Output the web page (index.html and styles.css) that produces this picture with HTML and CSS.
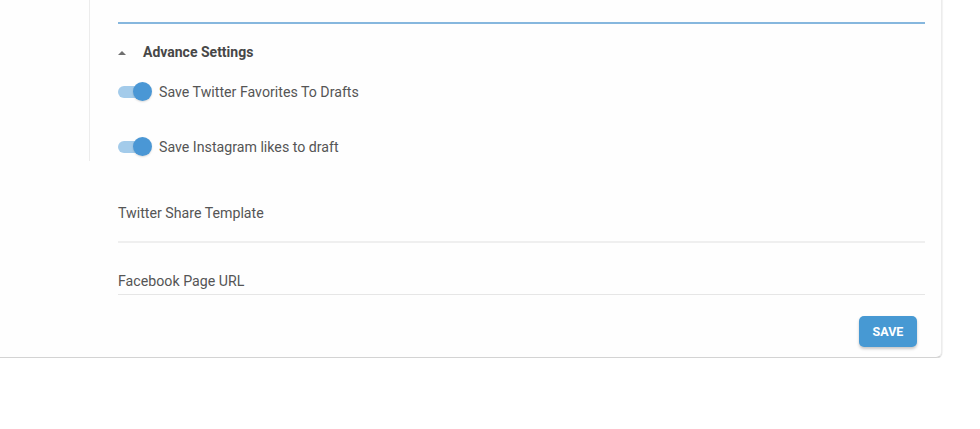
FILE: index.html
```html
<!DOCTYPE html>
<html>
<head>
<meta charset="utf-8">
<link rel="stylesheet" href="styles.css">
</head>
<body>
<div class="card">
  <div class="advanced">
    <div class="field field-active"></div>
    <div class="adv-head">
      <span class="caret"></span>
      <span class="adv-title">Advance Settings</span>
    </div>
    <label class="toggle-row first">
      <span class="switch"><span class="track"></span><span class="thumb"></span></span>
      <span class="toggle-label">Save Twitter Favorites To Drafts</span>
    </label>
    <label class="toggle-row second">
      <span class="switch"><span class="track"></span><span class="thumb"></span></span>
      <span class="toggle-label">Save Instagram likes to draft</span>
    </label>
  </div>
  <div class="field field-template"><span class="field-label">Twitter Share Template</span></div>
  <div class="field field-url"><span class="field-label">Facebook Page URL</span></div>
  <div class="actions">
    <button class="save-btn">SAVE</button>
  </div>
</div>
</body>
</html>
```

FILE: styles.css
```css
html, body {
  margin: 0;
  padding: 0;
  background: #ffffff;
  font-family: Roboto, "Liberation Sans", Arial, sans-serif;
  overflow: hidden;
}

.card {
  margin-left: -10px;
  margin-top: -20px;
  width: 952px;
  box-sizing: border-box;
  background: #fefefe;
  border-right: 1px solid #ececec;
  border-bottom: 1px solid #d3d3d3;
  border-radius: 0 0 6px 6px;
  box-shadow: 0 1px 1px rgba(0,0,0,0.12), 1px 0 1px rgba(0,0,0,0.04);
  padding: 0 16px 10px 128px;
}

.advanced {
  margin-left: -29px;
  padding-left: 28px;
  border-left: 1px solid #ececec;
  height: 181px;
}

.field {
  box-sizing: border-box;
}

.field-active {
  height: 44px;
  border-bottom: 2px solid #86b7de;
}

.adv-head {
  display: flex;
  align-items: center;
  height: 20px;
  margin-top: 18px;
}

.caret {
  width: 0;
  height: 0;
  border-left: 4px solid transparent;
  border-right: 4px solid transparent;
  border-bottom: 4px solid #6f6f6f;
  margin-right: 17px;
  margin-top: 1px;
}

.adv-title {
  font-size: 14px;
  font-weight: 700;
  color: #474747;
}

.toggle-row {
  display: flex;
  align-items: center;
  height: 20px;
}

.toggle-row.first {
  margin-top: 20px;
}

.toggle-row.second {
  margin-top: 35px;
}

.switch {
  position: relative;
  width: 34px;
  height: 20px;
  margin-right: 7px;
  flex: none;
}

.track {
  position: absolute;
  left: 0;
  top: 4px;
  width: 32px;
  height: 12px;
  border-radius: 6px;
  background: #a3cbea;
}

.thumb {
  position: absolute;
  left: 15px;
  top: 0;
  width: 19px;
  height: 19px;
  border-radius: 50%;
  background: #4a97d5;
  box-shadow: 0 1px 2px rgba(0,0,0,0.15);
}

.toggle-label {
  font-size: 14.2px;
  color: #555555;
}

.field-template {
  height: 82px;
  padding-top: 42px;
  border-bottom: 2px solid #efefef;
}

.field-url {
  height: 52px;
  padding-top: 28px;
  border-bottom: 1px solid #e6e6e6;
}

.field-label {
  font-size: 14.2px;
  color: #555555;
}

.actions {
  display: flex;
  justify-content: flex-end;
  margin-top: 21px;
  padding-right: 8px;
}

.save-btn {
  width: 58px;
  height: 31px;
  border: none;
  border-radius: 5px;
  background: #4799d3;
  color: #ffffff;
  font-family: Roboto, "Liberation Sans", Arial, sans-serif;
  font-size: 12.5px;
  font-weight: 700;
  padding: 0;
  box-shadow: 0 2px 3px rgba(0,0,0,0.22);
}
```
